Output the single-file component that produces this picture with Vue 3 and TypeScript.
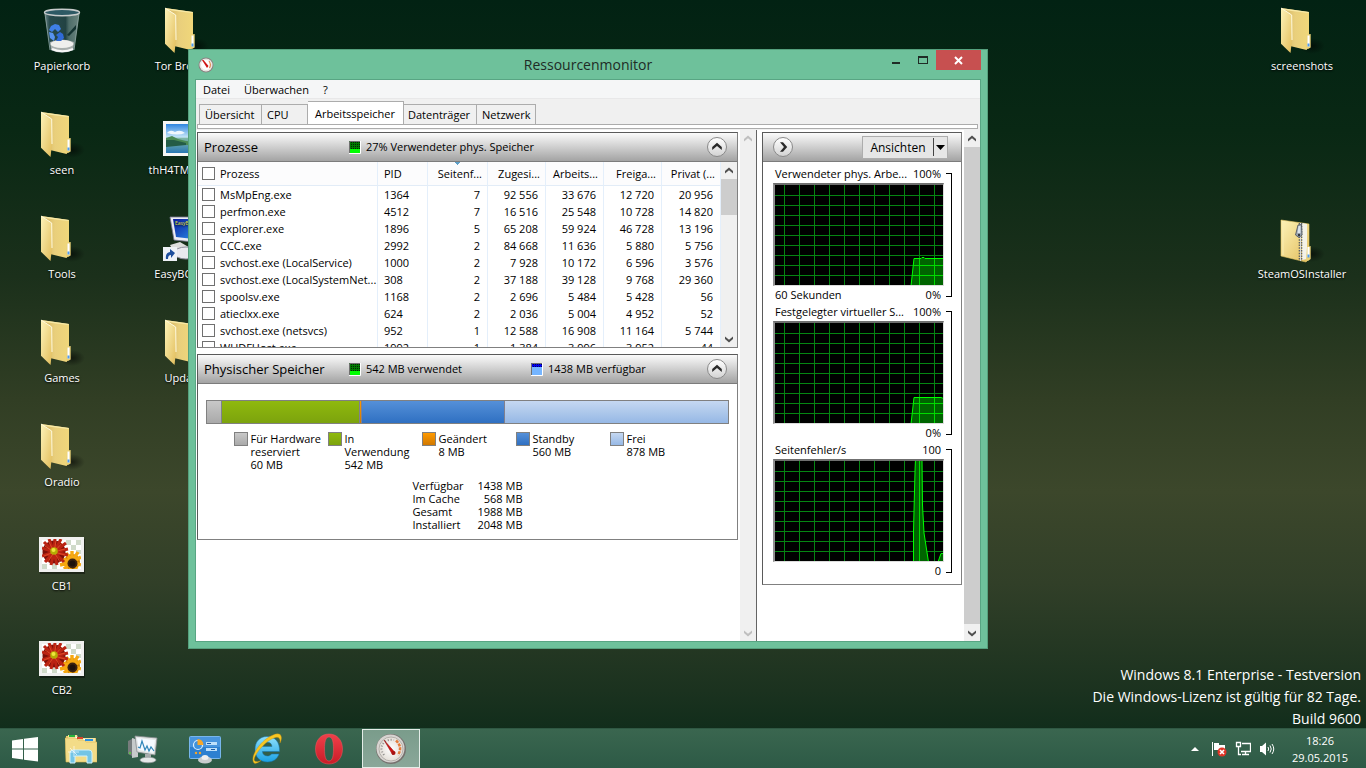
<script setup lang="ts">
interface DesktopIcon { label: string; icon: string; col: number; row: number }
interface ProcessRow { name: string; values: string[] }
interface Graph { title: string; max: string; min: string; time: string; line: string }

const icons: DesktopIcon[] = [
  { label: 'Papierkorb', icon: 'bin', col: 1, row: 1 },
  { label: 'seen', icon: 'folder', col: 1, row: 2 },
  { label: 'Tools', icon: 'folder', col: 1, row: 3 },
  { label: 'Games', icon: 'folder', col: 1, row: 4 },
  { label: 'Oradio', icon: 'folder', col: 1, row: 5 },
  { label: 'CB1', icon: 'flowers', col: 1, row: 6 },
  { label: 'CB2', icon: 'flowers', col: 1, row: 7 },
  { label: 'Tor Browser', icon: 'folder', col: 2, row: 1 },
  { label: 'thH4TMXKS5Q', icon: 'photo', col: 2, row: 2 },
  { label: 'EasyBCD 2.2', icon: 'computer', col: 2, row: 3 },
  { label: 'Updates', icon: 'folder', col: 2, row: 4 },
]
const rightIcons: DesktopIcon[] = [
  { label: 'screenshots', icon: 'folder', col: 1, row: 1 },
  { label: 'SteamOSInstaller', icon: 'zip', col: 1, row: 3 },
]
const menus = ['Datei', 'Überwachen', '?']
const tabs = ['Übersicht', 'CPU', 'Arbeitsspeicher', 'Datenträger', 'Netzwerk']
const columns = ['PID', 'Seitenf...', 'Zugesi...', 'Arbeits...', 'Freiga...', 'Privat (...']
const processes: ProcessRow[] = [
  { name: 'MsMpEng.exe', values: ['1364', '7', '92 556', '33 676', '12 720', '20 956'] },
  { name: 'perfmon.exe', values: ['4512', '7', '16 516', '25 548', '10 728', '14 820'] },
  { name: 'explorer.exe', values: ['1896', '5', '65 208', '59 924', '46 728', '13 196'] },
  { name: 'CCC.exe', values: ['2992', '2', '84 668', '11 636', '5 880', '5 756'] },
  { name: 'svchost.exe (LocalService)', values: ['1000', '2', '7 928', '10 172', '6 596', '3 576'] },
  { name: 'svchost.exe (LocalSystemNet...', values: ['308', '2', '37 188', '39 128', '9 768', '29 360'] },
  { name: 'spoolsv.exe', values: ['1168', '2', '2 696', '5 484', '5 428', '56'] },
  { name: 'atieclxx.exe', values: ['624', '2', '2 036', '5 004', '4 952', '52'] },
  { name: 'svchost.exe (netsvcs)', values: ['952', '1', '12 588', '16 908', '11 164', '5 744'] },
  { name: 'WUDFHost.exe', values: ['1992', '1', '1 384', '3 996', '3 952', '44'] },
]
const memory = [
  { lines: ['Für Hardware', 'reserviert'], mb: 60, kind: 'hardware' },
  { lines: ['In', 'Verwendung'], mb: 542, kind: 'used' },
  { lines: ['Geändert'], mb: 8, kind: 'modified' },
  { lines: ['Standby'], mb: 560, kind: 'standby' },
  { lines: ['Frei'], mb: 878, kind: 'free' },
]
const totals = [
  ['Verfügbar', '1438 MB'],
  ['Im Cache', '568 MB'],
  ['Gesamt', '1988 MB'],
  ['Installiert', '2048 MB'],
]
const graphs: Graph[] = [
  { title: 'Verwendeter phys. Arbe...', max: '100%', min: '0%', time: '60 Sekunden', line: '136,101 139,73.5 146,73.5 147,72.5 149,72.5 150,73.5 170,73.5' },
  { title: 'Festgelegter virtueller S...', max: '100%', min: '0%', time: '', line: '136,101 139,74.5 166,74.5 170,76' },
  { title: 'Seitenfehler/s', max: '100', min: '0', time: '', line: '138.5,101 138.5,70 140,10 140.5,-2 147,-2 147.5,44 149,72 153.5,101 163,101 166,92.5 170,92.5' },
]
const gridX = Array.from({ length: 11 }, (_, i) => 9.5 + i * 15)
const gridY = Array.from({ length: 9 }, (_, i) => 10.5 + i * 10)
const pinned = [
  { name: 'Explorer', icon: 'explorer' },
  { name: 'Leistungsüberwachung', icon: 'perf' },
  { name: 'Systemsteuerung', icon: 'control' },
  { name: 'Internet Explorer', icon: 'ie' },
  { name: 'Opera', icon: 'opera' },
  { name: 'Ressourcenmonitor', icon: 'gauge' },
]
</script>

<template>
  <div class="screen">
    <svg class="sprites" width="0" height="0" aria-hidden="true">
      <defs>
        <linearGradient id="gFlap" x1="0" y1="0" x2="1" y2="1"><stop offset="0" stop-color="#fdf3b8" /><stop offset="1" stop-color="#e2bd5b" /></linearGradient>
        <linearGradient id="gBack" x1="0" y1="0" x2="1" y2="0"><stop offset="0" stop-color="#cfae5c" /><stop offset=".5" stop-color="#e9cf7c" /><stop offset="1" stop-color="#f0d77a" /></linearGradient>
        <linearGradient id="gGlass" x1="0" y1="0" x2="1" y2="0"><stop offset="0" stop-color="#7f9a9e" /><stop offset=".15" stop-color="#2e5156" /><stop offset=".6" stop-color="#27484b" /><stop offset=".7" stop-color="#5b7a78" /><stop offset="1" stop-color="#7d9692" /></linearGradient>
        <linearGradient id="gSky" x1="0" y1="0" x2="0" y2="1"><stop offset="0" stop-color="#2f86e0" /><stop offset=".45" stop-color="#c4e4f8" /><stop offset=".5" stop-color="#7fb7a8" /><stop offset="1" stop-color="#2a78b4" /></linearGradient>
        <linearGradient id="gIe" x1="0" y1="0" x2="0" y2="1"><stop offset="0" stop-color="#8fe0fb" /><stop offset="1" stop-color="#1ba2e4" /></linearGradient>
        <linearGradient id="gOpera" x1="0" y1="0" x2="0" y2="1"><stop offset="0" stop-color="#f0404a" /><stop offset="1" stop-color="#c81c27" /></linearGradient>
        <linearGradient id="gScreen" x1="0" y1="0" x2="1" y2="1"><stop offset="0" stop-color="#0a1b9c" /><stop offset="1" stop-color="#2e9bf0" /></linearGradient>
        <radialGradient id="gShadow"><stop offset="0" stop-color="#000" stop-opacity=".55" /><stop offset="1" stop-color="#000" stop-opacity="0" /></radialGradient>
        <radialGradient id="gDial"><stop offset="0" stop-color="#fff" /><stop offset="1" stop-color="#e4dfd8" /></radialGradient>
      </defs>
      <symbol id="folder" viewBox="0 0 48 48">
        <ellipse cx="34" cy="39" rx="13" ry="8" fill="url(#gShadow)" />
        <path d="M3 1 31 5V40L28.500 43 12 39Z" fill="url(#gBack)" />
        <path d="M3 1 31 5 30 6 6 3Z" fill="#f8e9a6" />
        <path d="M29 27.500 32.700 27V40.500L30 42 28 41Z" fill="#ead178" />
        <path d="M29.500 28.500H31.500V39.500H29.500Z" fill="#fff" /><path d="M29.500 36.500h2v3h-2Z" fill="#4d9af0" />
        <path d="M3 1 13.700 8 14 33 12.500 46 3 36.700Z" fill="url(#gFlap)" />
        <path d="M3 1 13.700 8 14 33" fill="none" stroke="#fffbe0" stroke-width="1" />
      </symbol>
      <symbol id="zip" viewBox="0 0 48 48">
        <ellipse cx="34" cy="39" rx="13" ry="8" fill="url(#gShadow)" />
        <path d="M3 5 31 9V44L28 47 3 41Z" fill="url(#gFlap)" stroke="#e5c766" stroke-width=".6" />
        <path d="M24 8 29 9V44L24 45Z" fill="#f4f2e8" />
        <path d="M5 7V40" stroke="#f9edaf" stroke-width="1" />
        <path d="M29 32 32.700 31V44L30 46 28 45Z" fill="#ead178" /><path d="M29.500 32h2v10h-2Z" fill="#fff" /><path d="M29.500 39.500h2v3h-2Z" fill="#4d9af0" />
        <path d="M22.500 8V46" stroke="#5e6266" stroke-width="3.600" stroke-dasharray="1.500 1.200" />
        <path d="M22.500 8V46" stroke="#d9dcdf" stroke-width="1" />
        <path d="M20 10 23.500 9.500 24 20 21 22.500 17.500 20Z" fill="#9fa8b4" stroke="#454d58" stroke-width=".8" />
        <path d="M20.500 11 22.500 11 22.500 18 19.500 18Z" fill="#dbe2ea" /><circle cx="21" cy="20" r="1.200" fill="#30363e" />
      </symbol>
      <symbol id="bin" viewBox="0 0 48 48">
        <path d="M6.500 5 41.500 5 36 43Q24 48 12 43Z" fill="url(#gGlass)" fill-opacity=".85" />
        <path d="M12 35Q24 30 36 35L35 43Q24 48 13 43Z" fill="#a9afae" /><ellipse cx="24" cy="37" rx="11.500" ry="4" fill="#efefed" />
        <path d="M14 42Q24 46.500 35 42" fill="none" stroke="#f7f7f7" stroke-width="2" />
        <path d="M38 18 29 28 31 29 38 22Z" fill="#143331" />
        <path d="M13 19 17 17 21 18 23 22 20 25 17 22 14 25 11 23Z" fill="#3f7fe6" />
        <path d="M11 25 15 26 17 30 16 34 12 31Z" fill="#5793f0" />
        <path d="M18 28 22 25 25 27 26 31 23 34 18 34 20 30Z" fill="#2f6ad6" />
        <ellipse cx="24" cy="5.500" rx="17.500" ry="3.200" fill="#2d5964" stroke="#c7cbcb" stroke-width="1.400" />
        <path d="M7 7 12 43M41 7 36 43" stroke="#93a9a7" stroke-width=".8" fill="none" />
      </symbol>
      <symbol id="flowers" viewBox="0 0 48 48">
        <path d="M2 12H47V47H2Z" fill="#000" fill-opacity=".4" />
        <path d="M1 10H46V45H1Z" fill="#f0f0ef" />
        <path d="M4 13H43V42H4Z" fill="#fff" />
        <path d="M28 13h5v5h-5zM38 13h5v5h-5zM33 18h5v5h-5zM38 23h5v4h-5zM4 37h5v5H4zM14 37h5v5h-5z" fill="#cfdac9" />
        <svg x="4" y="12" width="39" height="30" viewBox="4 12 39 30">
          <circle cx="34" cy="35" r="8" fill="#c97d00" />
          <path d="M34 35 24 32M34 35 28 26M34 35 34 24M34 35 40 25M34 35 43 30M34 35 43 38M34 35 39 42M34 35 32 43M34 35 26 42M34 35 22 38" stroke="#f6a810" stroke-width="3.400" />
          <circle cx="34.500" cy="36.500" r="5" fill="#3b2110" /><circle cx="34.500" cy="36.500" r="3" fill="#1d100b" />
          <circle cx="16" cy="25" r="11.500" fill="#7d1008" />
          <path d="M16 25 4 21M16 25 6 15M16 25 11 12M16 25 17 11M16 25 23 12M16 25 28 16M16 25 30 22M16 25 30 28M16 25 26 35M16 25 19 38M16 25 13 38M16 25 7 35M16 25 4 29" stroke="#bb2312" stroke-width="3" />
          <path d="M16 25 7 19M16 25 11 15M16 25 18 14M16 25 24 16M16 25 27 22M16 25 27 28M16 25 22 35M16 25 10 35M16 25 6 29" stroke="#e4532c" stroke-width=".8" />
        </svg>
        <circle cx="16" cy="24" r="3.800" fill="#b5ab05" /><circle cx="15.500" cy="23" r="2" fill="#efe63a" />
      </symbol>
      <symbol id="photo" viewBox="0 0 48 48">
        <path d="M1 10H47V45H1Z" fill="#f7f7f5" /><path d="M4 13H44V42H4Z" fill="url(#gSky)" />
        <path d="M5 22q3-4 8-1 5-3 10 1-7 3-18 0Z" fill="#fff" fill-opacity=".85" />
        <path d="M4 27 10 25 16 28 24 30 44 32V34H4Z" fill="#4b8a55" /><path d="M4 29 12 29 24 32V34L4 36Z" fill="#245c46" />
      </symbol>
      <symbol id="computer" viewBox="0 0 48 48">
        <path d="M8 30 18 27 30 34V42L12 38Z" fill="#ddd" /><ellipse cx="24" cy="38" rx="12" ry="6" fill="#e9e9ef" stroke="#8d8d9c" stroke-width="1" />
        <path d="M8 2H42V28L12 25Z" fill="#ececf3" stroke="#777790" stroke-width=".8" /><path d="M11 4H40V25L14 22Z" fill="url(#gScreen)" />
        <text x="13" y="10" font-size="5" fill="#e8e23c">EasyBCD</text>
        <path d="M1 32H15V46H1Z" fill="#eef1f6" /><path d="M4 44Q3 38 8 37V34L13 38 9 43V40Q6 40 6 44Z" fill="#1e4e9c" />
      </symbol>
      <symbol id="explorer" viewBox="0 0 32 32">
        <path d="M1 3H11L13 5H31V29H1Z" fill="#e6c768" /><path d="M3 2h9l1 3H30v6H3Z" fill="#f5e4a0" /><path d="M4 2h6v2H4z" fill="#27b43c" /><path d="M12 4h6v2h-6z" fill="#d8432c" /><path d="M20 6h8v2h-8z" fill="#2a8fe0" /><path d="M10 4h2v2h-2zM18 6h2v2h-2z" fill="#fff" />
        <path d="M0 5H11L13 7H19L21 9H32V29H1Z" fill="#f3dc88" stroke="#d9b755" stroke-width=".6" />
        <path d="M5 30V20Q5 17 8 17H24Q27 17 27 20V30H22V23H10V30Z" fill="#74c5e6" stroke="#d0f1fc" stroke-width="1" />
        <path d="M9 13V24M3 19H14M5 15 12 22" stroke="#fff" stroke-width=".8" stroke-opacity=".8" />
      </symbol>
      <symbol id="perf" viewBox="0 0 32 32">
        <path d="M1 8 7 5V24L1 21Z" fill="#777c7d" /><path d="M5 5 11 7V24L5 25Z" fill="#c6caca" /><circle cx="3" cy="20" r="1" fill="#54d437" />
        <path d="M8 3 30 5 28 22 10 19Z" fill="#e3e5e5" stroke="#878c8e" stroke-width=".8" /><path d="M10 5 28 7 26.500 20 12 17Z" fill="#f5faff" />
        <path d="M11 14 13 15 15 8 18 17 20 13 22 18 24 14 27 18" stroke="#2f86ba" stroke-width="1.200" fill="none" />
        <path d="M18 21h6v5h-6z" fill="#a8adae" /><ellipse cx="21" cy="27" rx="8" ry="2.800" fill="#e5e8e8" stroke="#969c9d" stroke-width=".7" />
      </symbol>
      <symbol id="control" viewBox="0 0 32 32">
        <rect x=".5" y="3.500" width="31" height="22" rx="1" fill="#2d80d0" stroke="#78b6ec" /><rect x="1" y="4" width="30" height="10" fill="#4995de" />
        <circle cx="9" cy="12" r="4.500" fill="#3f93dd" stroke="#dcefff" stroke-width="1.200" /><path d="M8.500 12V6Q14 6 14.500 12Z" fill="#f7a629" />
        <path d="M17 9h11v3H17zM17 15h11v3H17z" fill="#bfe0fa" /><path d="M18 10h4v1h-4zM22 16h4v1h-4z" fill="#1e5ca2" />
        <circle cx="7" cy="20" r="1.200" fill="#f7a629" /><circle cx="11" cy="20" r="1.200" fill="#f7a629" />
        <ellipse cx="16" cy="27" rx="7" ry="3.500" fill="#c9cdce" /><ellipse cx="16" cy="24.500" rx="3.500" ry="2.500" fill="#eee" />
      </symbol>
      <symbol id="ie" viewBox="0 0 32 32">
        <path d="M16 3.500C8.500 3.500 4 9 4 16.500S9 29 16.500 29C22 29 26.500 26 28 21H20.500C19.500 22.500 18 23 16.500 23 13.500 23 11.500 21 11.400 18.500H28.500C29 9 24 3.500 16 3.500ZM11.500 13.500C12 10.500 14 9.300 16.500 9.300S20.800 10.800 21 13.500Z" fill="url(#gIe)" stroke="#1673ae" stroke-width=".5" />
        <path d="M3 30C-1 25 6 13 15 6 22 1 29-1 30 3 31 5 30 8 29 10 29.500 6 28 3 23 5 17 7 10 14 6 20 3 25 2 28 5 28.500 7 29 9 28 10 27.500 7 30 4 31 3 30Z" fill="#f8c722" stroke="#c48a12" stroke-width=".4" />
      </symbol>
      <symbol id="opera" viewBox="0 0 32 32">
        <path fill-rule="evenodd" d="M16 1C8 1 2.500 7 2.500 16S8 31 16 31 29.500 25 29.500 16 24 1 16 1ZM16 4C19.500 4 20.500 9 20.500 16S19.500 28 16 28 11.500 23 11.500 16 12.500 4 16 4Z" fill="url(#gOpera)" stroke="#f3565e" stroke-width=".5" />
      </symbol>
      <symbol id="gauge" viewBox="0 0 32 32">
        <circle cx="16" cy="16" r="15" fill="#76716e" /><circle cx="15.500" cy="15.500" r="14" fill="#d7d4d1" /><circle cx="16" cy="16" r="12" fill="url(#gDial)" stroke="#aaa49f" stroke-width=".8" />
        <path d="M21 7.500Q28 14 23 22" fill="none" stroke="#e57d3c" stroke-width="2.500" stroke-dasharray="3 1" />
        <path d="M9 22Q4 15 9 9.500 13 6 19 7" fill="none" stroke="#8d8b89" stroke-width="2" stroke-dasharray="1 2" />
        <path d="M9 7 20 19.500 17.500 21.500Z" fill="#d01515" stroke="#8e0808" stroke-width=".5" /><circle cx="18.500" cy="20" r="2" fill="#a81212" />
      </symbol>
      <symbol id="gaugeSmall" viewBox="0 0 16 16">
        <circle cx="8" cy="8" r="7.500" fill="#8a8280" /><circle cx="8" cy="8" r="6.500" fill="#f6f4f1" /><circle cx="8" cy="8" r="5.500" fill="#fff" stroke="#d8d2cc" stroke-width=".6" />
        <path d="M11 4Q13.500 7.500 11.500 11" fill="none" stroke="#e0894e" stroke-width="1.200" />
        <path d="M4 3 5.500 3 10.500 9 9 11Z" fill="#cf1313" />
      </symbol>
      <symbol id="chevUp" viewBox="0 0 10 10"><path d="M1 7.500V5L5 1.500 9 5V7.500L5 4.200Z" fill="currentColor" /></symbol>
      <symbol id="chevDown" viewBox="0 0 10 10"><path d="M1 2.500V5L5 8.500 9 5V2.500L5 5.800Z" fill="currentColor" /></symbol>
      <symbol id="chevRight" viewBox="0 0 10 10"><path d="M2.500 1H5L8.500 5 5 9H2.500L5.800 5Z" fill="currentColor" /></symbol>
    </svg>

    <main class="desktop">
      <div class="icons">
        <div v-for="i in icons" :key="i.label" class="desk-icon" :class="['col' + i.col, 'row' + i.row]">
          <svg width="48" height="48"><use :href="'#' + i.icon" /></svg>
          <span>{{ i.label }}</span>
        </div>
      </div>
      <div class="icons right">
        <div v-for="i in rightIcons" :key="i.label" class="desk-icon" :class="['col' + i.col, 'row' + i.row]">
          <svg width="48" height="48"><use :href="'#' + i.icon" /></svg>
          <span>{{ i.label }}</span>
        </div>
      </div>
      <div class="watermark">
        <p>Windows 8.1 Enterprise - Testversion</p>
        <p>Die Windows-Lizenz ist gültig für 82 Tage.</p>
        <p>Build 9600</p>
      </div>

      <section class="window">
        <header class="titlebar">
          <svg class="app-icon" width="16" height="16"><use href="#gaugeSmall" /></svg>
          <h1>Ressourcenmonitor</h1>
          <div class="caption">
            <button class="cap min" aria-label="Minimieren"><i></i></button>
            <button class="cap max" aria-label="Maximieren"><i></i></button>
            <button class="cap close" aria-label="Schließen"><svg width="9" height="9" viewBox="0 0 9 9"><path d="M1 1 8 8M8 1 1 8" stroke="#fff" stroke-width="2" /></svg></button>
          </div>
        </header>

        <div class="client">
          <nav class="menubar"><button v-for="m in menus" :key="m">{{ m }}</button></nav>
          <div class="tabs" role="tablist">
            <button v-for="(t, i) in tabs" :key="t" role="tab" :class="['tab', 'tab' + i, { active: i === 2 }]" :aria-selected="i === 2">{{ t }}</button>
          </div>
          <div class="strip"></div>

          <div class="content">
            <div class="left">
              <section class="panel processes">
                <header class="panel-head">
                  <h2>Prozesse</h2>
                  <span class="stat"><svg width="12" height="13" viewBox="0 0 12 13"><path d="M0 0H11V8H0Z" fill="#007a00" /><path d="M0 8H11V12H0Z" fill="#0f0" /><path d="M2.500 1V8M4.500 1V8M6.500 1V8M8.500 1V8M10.500 1V8" stroke="#002800" stroke-dasharray="1 1" /><path d="M.5 12V.5H11" stroke="#707070" fill="none" /><path d="M0 12.500H11.500V0" stroke="#fff" fill="none" /></svg>27% Verwendeter phys. Speicher</span>
                  <button class="round" aria-label="Einklappen"><svg width="12" height="12"><use href="#chevUp" /></svg></button>
                </header>
                <div class="list">
                  <div class="table-clip">
                    <table>
                      <colgroup><col /><col class="c-pid" /><col class="c-fault" /><col v-for="n in 3" :key="n" class="c-num" /><col class="c-last" /></colgroup>
                      <thead>
                        <tr>
                          <th><label><input type="checkbox" />Prozess</label></th>
                          <th v-for="(c, i) in columns" :key="c" :class="{ sorted: i === 1 }">{{ c }}</th>
                        </tr>
                      </thead>
                      <tbody>
                        <tr v-for="p in processes" :key="p.name">
                          <td><label><input type="checkbox" />{{ p.name }}</label></td>
                          <td v-for="(v, i) in p.values" :key="i">{{ v }}</td>
                        </tr>
                      </tbody>
                    </table>
                  </div>
                  <div class="scroll inner">
                    <button aria-label="Nach oben"><svg width="10" height="10"><use href="#chevUp" /></svg></button>
                    <div class="thumb"></div>
                    <button aria-label="Nach unten"><svg width="10" height="10"><use href="#chevDown" /></svg></button>
                  </div>
                </div>
              </section>

              <section class="panel memory">
                <header class="panel-head">
                  <h2>Physischer Speicher</h2>
                  <span class="stat"><svg width="12" height="13" viewBox="0 0 12 13"><path d="M0 0H11V8H0Z" fill="#007a00" /><path d="M0 8H11V12H0Z" fill="#0f0" /><path d="M2.500 1V8M4.500 1V8M6.500 1V8M8.500 1V8M10.500 1V8" stroke="#002800" stroke-dasharray="1 1" /><path d="M.5 12V.5H11" stroke="#707070" fill="none" /><path d="M0 12.500H11.500V0" stroke="#fff" fill="none" /></svg>542 MB verwendet</span>
                  <span class="stat last"><svg width="12" height="13" viewBox="0 0 12 13"><path d="M0 0H11V4H0Z" fill="#0000f0" /><path d="M0 4H11V12H0Z" fill="#75b5ff" /><path d="M2.500 1V4M4.500 1V4M6.500 1V4M8.500 1V4M10.500 1V4" stroke="#000060" stroke-dasharray="1 1" /><path d="M.5 12V.5H11" stroke="#707070" fill="none" /><path d="M0 12.500H11.500V0" stroke="#fff" fill="none" /></svg>1438 MB verfügbar</span>
                  <button class="round" aria-label="Einklappen"><svg width="12" height="12"><use href="#chevUp" /></svg></button>
                </header>
                <div class="bar"><div v-for="m in memory" :key="m.kind" :class="m.kind" :style="{ flexGrow: m.mb }"></div></div>
                <div class="legend">
                  <div v-for="m in memory" :key="m.kind" class="entry">
                    <i :class="m.kind"></i>
                    <p><span v-for="l in m.lines" :key="l">{{ l }}</span><span>{{ m.mb }} MB</span></p>
                  </div>
                </div>
                <table class="totals">
                  <tbody><tr v-for="t in totals" :key="t[0]"><th scope="row">{{ t[0] }}</th><td>{{ t[1] }}</td></tr></tbody>
                </table>
              </section>
            </div>
            <div class="scroll disabled">
              <button aria-label="Nach oben"><svg width="10" height="10"><use href="#chevUp" /></svg></button>
              <button aria-label="Nach unten"><svg width="10" height="10"><use href="#chevDown" /></svg></button>
            </div>
            <aside class="side">
              <section class="panel graphs">
                <header class="panel-head">
                  <button class="round" aria-label="Ausblenden"><svg width="12" height="12"><use href="#chevRight" /></svg></button>
                  <button class="views"><span>Ansichten</span><i></i><svg width="13" height="9" viewBox="0 0 13 9"><path d="M2 2H11L6.500 7Z" /></svg></button>
                </header>
                <div v-for="(g, n) in graphs" :key="g.title" class="graph">
                  <div class="g-main">
                    <div class="g-row"><span>{{ g.title }}</span><span>{{ g.max }}</span></div>
                    <svg class="plot" width="168" height="100" viewBox="0 0 168 100">
                      <g stroke="#058512">
                        <path v-for="x in gridX" :key="x" :d="`M${x} 0V100`" /><path v-for="y in gridY" :key="y" :d="`M0 ${y}H168`" />
                      </g>
                      <clipPath :id="'clip' + n"><polygon :points="g.line + ' 170,101'" /></clipPath>
                      <polygon :points="g.line + ' 170,101'" fill="#006400" />
                      <g stroke="#00dc00" :clip-path="`url(#clip${n})`">
                        <path v-for="x in gridX" :key="x" :d="`M${x} 0V100`" /><path v-for="y in (g.max === '100%' ? gridY : [])" :key="y" :d="`M0 ${y}H168`" />
                      </g>
                      <polyline :points="g.line" fill="none" stroke="#00ff00" />
                    </svg>
                    <div class="g-row foot"><span>{{ g.time }}</span><span>{{ g.min }}</span></div>
                  </div>
                  <div class="bracket"></div>
                </div>
              </section>
            </aside>
            <div class="scroll outer">
              <button aria-label="Nach oben"><svg width="10" height="10"><use href="#chevUp" /></svg></button>
              <div class="thumb"></div>
              <button aria-label="Nach unten"><svg width="10" height="10"><use href="#chevDown" /></svg></button>
            </div>
          </div>
        </div>
      </section>
    </main>

    <footer class="taskbar">
      <button class="start" aria-label="Start">
        <svg width="28" height="26" viewBox="0 0 28 26"><path d="M1 4.500 12 3V12.500H1ZM13 2.800 27 1V12.500H13ZM1 13.500H12V23.500L1 22ZM13 13.500H27V25.500L13 23.700Z" fill="#fff" /></svg>
      </button>
      <button v-for="p in pinned" :key="p.name" class="task" :class="{ running: p.icon === 'gauge' }" :aria-label="p.name"><svg width="32" height="32"><use :href="'#' + p.icon" /></svg></button>
      <div class="tray">
        <button aria-label="Ausgeblendete Symbole"><svg width="16" height="16" viewBox="0 0 16 16"><path d="M4 10 8 6 12 10Z" fill="#fff" /></svg></button>
        <button aria-label="Wartungscenter"><svg width="16" height="16" viewBox="0 0 16 16"><path d="M1.500 1V15" stroke="#fff" /><path d="M3 2H8V4H14V9H3Z" fill="#fff" /><circle cx="11" cy="11" r="4.500" fill="#df3527" /><path d="M9 9 13 13M13 9 9 13" stroke="#fff" stroke-width="1.600" /></svg></button>
        <button aria-label="Netzwerk"><svg width="16" height="16" viewBox="0 0 16 16" fill="none" stroke="#fff"><path d="M7 2.500H15.500V10.500H6M1.500 1.500H5.500V5.500H1.500ZM3.500 6V13.500H6M10.500 11V13M7 13.500H14" stroke-width="1.300" /></svg></button>
        <button aria-label="Lautstärke"><svg width="16" height="16" viewBox="0 0 16 16"><path d="M1 5H3L7 1.500V14.500L3 11H1Z" fill="#fff" /><path d="M9 6Q10.300 8 9 10M11 4.500Q13.500 8 11 11.500M13 3Q16.500 8 13 13" stroke="#fff" fill="none" /></svg></button>
        <time class="clock"><span>18:26</span><span>29.05.2015</span></time>
      </div>
    </footer>
  </div>
</template>

<style>
body { margin: 0; }
</style>

<style scoped>
.screen {
  height: 100vh;
  display: flex;
  flex-direction: column;
  overflow: hidden;
  font: 11px/13px "Open Sans", "Noto Sans", sans-serif;
  color: #000;
  background: linear-gradient(180deg, #022213 0%, #092814 17%, #1b301b 36%, #313e24 52%, #3c472b 64%, #313f28 76%, #1b321f 90%, #112d1b 95%);
}
.screen * { box-sizing: border-box; }
.sprites { position: absolute; }
button { font: inherit; color: inherit; background: none; border: 0; padding: 0; margin: 0; }
p, h1, h2 { margin: 0; font-weight: 400; }
svg { display: block; flex: none; }

.desktop { flex: 1; position: relative; min-height: 0; }
.icons { position: absolute; left: 0; top: 0; display: grid; grid-template-columns: repeat(2, 124px); grid-template-rows: repeat(7, 104px); }
.icons.right { left: auto; right: 2px; grid-template-columns: 124px; }
.desk-icon { display: flex; flex-direction: column; align-items: center; padding-top: 7px; gap: 3px; color: #fff; line-height: 16px; text-shadow: 0 1px 2px #000; }
.col1 { grid-column: 1; }
.col2 { grid-column: 2; }
.row1 { grid-row: 1; }
.row2 { grid-row: 2; }
.row3 { grid-row: 3; }
.row4 { grid-row: 4; }
.row5 { grid-row: 5; }
.row6 { grid-row: 6; }
.row7 { grid-row: 7; }
.watermark { position: absolute; right: 5px; bottom: -2px; color: #fff; font-size: 14px; line-height: 22px; text-align: right; }

.window { position: absolute; inset: 49px 378px 79px 188px; min-width: 640px; display: flex; flex-direction: column; background: #6ec19b; border: 1px solid #55a07d; padding: 0 6px 6px; }
.titlebar { display: flex; align-items: center; height: 29px; }
.app-icon { margin-left: 3px; }
.titlebar h1 { flex: 1; text-align: center; font-size: 14px; line-height: 20px; color: #202c26; padding-left: 80px; }
.caption { display: flex; align-self: flex-start; height: 20px; }
.cap { width: 27px; display: flex; justify-content: center; align-items: center; }
.min i { width: 8px; height: 2px; margin-top: 6px; background: #202c26; }
.max i { width: 10px; height: 8px; border: 1px solid #202c26; border-top-width: 2px; }
.close { width: 45px; background: #c75050; }
.client { flex: 1; min-height: 0; display: flex; flex-direction: column; background: #f0f0f0; border: 1px solid #58a583; }
.menubar { height: 19px; flex: none; display: flex; gap: 14px; padding-left: 7px; background: #f5f6f7; border-bottom: 1px solid #e8e8e9; }
.tabs { display: flex; align-items: flex-end; height: 26px; flex: none; padding-left: 3px; }
.tab { height: 21px; border: 1px solid #acacac; border-left-width: 0; text-align: left; padding: 0 5px; white-space: nowrap; }
.tab0 { width: 63px; border-left-width: 1px; }
.tab1 { width: 46px; }
.tab2 { width: 96px; }
.tab3 { width: 73px; padding: 0 4px; }
.tab4 { width: 59px; }
.tab.active { height: 24px; background: #fff; border-bottom-color: #fff; padding: 0 7px; }
.strip { height: 5px; flex: none; margin: -1px 2px 0 1px; background: #fff; border: 1px solid #acacac; }
.content { flex: 1; min-height: 0; display: flex; margin-top: 1px; background: #fff; }
.left { flex: 1; min-width: 0; padding: 2px 2px 0 1px; display: flex; flex-direction: column; gap: 6px; }
.panel { border: 1px solid #808080; border-top-color: #5a5a5a; border-left-color: #5a5a5a; }
.panel-head { height: 29px; display: flex; align-items: center; padding: 0 10px 0 6px; background: linear-gradient(#fbfbfb, #a3a3a3); border-bottom: 1px solid #7c7c7c; }
.panel-head h2 { flex: none; width: 145px; font-size: 13px; line-height: 18px; }
.stat { flex: none; width: 182px; display: flex; align-items: center; gap: 5px; line-height: 12px; white-space: nowrap; }
.stat.last { width: auto; }
.round { width: 20px; height: 20px; flex: none; border: 1px solid #8a8a8a; border-radius: 50%; background: linear-gradient(#fff, #d3d3d3); display: flex; align-items: center; justify-content: center; margin-left: auto; color: #2a2a2a; }

.list { display: flex; height: 185px; }
.table-clip { flex: 1; min-width: 0; overflow: hidden; }
table { border-collapse: separate; border-spacing: 0; }
.table-clip table { table-layout: fixed; width: 100%; }
.c-pid { width: 50px; }
.c-fault { width: 60px; }
.c-num { width: 58px; }
.c-last { width: 59px; }
.table-clip th, .table-clip td { font-weight: 400; height: 17px; padding: 0 7px 0 0; text-align: right; white-space: nowrap; border-right: 1px solid #e4effb; }
.table-clip th { height: 24px; padding-right: 5px; background: #fcfcfd; border-bottom: 1px solid #e2ecf7; }
.table-clip th:first-child, .table-clip td:first-child { text-align: left; padding: 0 0 0 4px; }
.table-clip th:nth-child(2), .table-clip td:nth-child(2) { text-align: left; padding: 0 0 0 6px; }
.table-clip .sorted { background: conic-gradient(from 315deg at 50% 100%, #5d9fc8 90deg, transparent 0) center top / 8px 3px no-repeat, #fcfcfd; }
.table-clip label { display: flex; align-items: center; gap: 5px; }
input { appearance: none; width: 13px; height: 13px; flex: none; margin: 0; border: 1px solid #707070; background: #fff; }

.scroll { width: 16px; flex: none; display: flex; flex-direction: column; background: #f0f0f0; }
.scroll button { height: 17px; flex: none; display: flex; justify-content: center; align-items: center; color: #505050; }
.scroll button:last-child { margin-top: auto; }
.inner .thumb { height: 36px; background: #cdcdcd; }
.outer .thumb { flex: 1; background: #cdcdcd; }
.scroll.disabled button { color: #bfbfbf; }

.memory { height: 186px; }
.bar { display: flex; height: 24px; margin: 16px 8px 0; border: 1px solid #808080; }
.bar div { flex-basis: 0; }
.bar div + div { box-shadow: -1px 0 0 #80808f; }
.hardware { background: linear-gradient(#c8c8c8, #a9a9a9); }
.used { background: linear-gradient(#8fb90d, #7ca30d); }
.modified { background: linear-gradient(#ff9a00, #d07800); }
.standby { background: linear-gradient(#5590d8, #2f70c2); }
.free { background: linear-gradient(#c5d8f1, #96b8e5); }
.legend { display: flex; justify-content: center; margin-top: 8px; }
.entry { width: 94px; display: flex; gap: 3px; padding-left: 1px; }
.entry i { width: 14px; height: 14px; flex: none; border: 1px solid #808080; }
.entry span { display: block; white-space: nowrap; }
.totals { margin: 8px auto 0; width: 110px; }
.totals th { font-weight: 400; text-align: left; padding: 0; }
.totals td { text-align: right; padding: 0; }

.side { flex: none; width: 208px; padding: 2px 2px 0 5px; border-left: 1px solid #646464; }
.graphs { height: 453px; }
.graphs .panel-head { padding: 0 13px 0 10px; justify-content: space-between; }
.graphs .round { margin: 0; }
.views { height: 23px; width: 86px; border: 1px solid #adadad; background: #e6e6e6; display: flex; align-items: center; font-size: 12px; }
.views span { flex: 1; text-align: center; }
.views i { width: 1px; height: 18px; background: #444; }
.graph { display: flex; height: 138px; padding: 5px 9px 0 10px; }
.g-main { width: 171px; }
.g-row { display: flex; justify-content: space-between; padding: 0 3px 0 2px; height: 16px; line-height: 14px; white-space: nowrap; }
.g-row.foot { height: 18px; line-height: 18px; }
.plot { box-sizing: content-box !important; background: #000; border: 2px solid #6f6f6f; border-left-color: #909090; border-right: 1px solid #ddd; border-bottom: 1px solid #ddd; }
.bracket { width: 6px; height: 124px; margin-top: 6px; margin-left: 2px; border: 1px solid #000; border-left: 0; }

.taskbar { flex: none; height: 40px; display: flex; align-items: stretch; background: linear-gradient(#3a664f, #2d5a46); border-top: 1px solid #2f5843; }
.start { width: 50px; display: flex; align-items: center; justify-content: center; }
.task { width: 58px; margin: 0 2px; display: flex; align-items: center; justify-content: center; }
.running { border: 1px solid #e4ede8; background: linear-gradient(#7a9c8b, #8aa799); }
.tray { margin-left: auto; display: flex; align-items: center; gap: 8px; color: #fff; }
.clock { width: 74px; margin-right: 9px; display: flex; flex-direction: column; text-align: center; line-height: 17px; }
</style>
